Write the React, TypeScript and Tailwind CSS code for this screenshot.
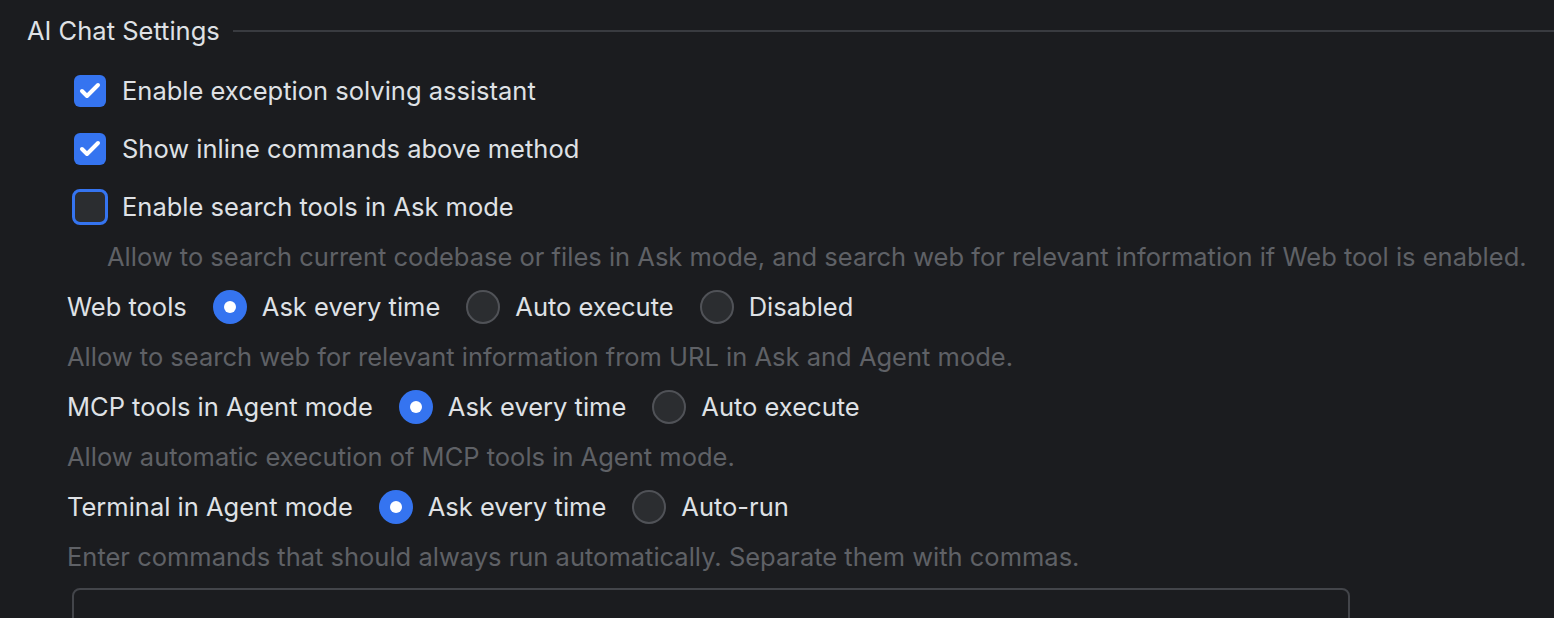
import { Check } from "lucide-react";

const font = { fontFamily: "Inter, 'Noto Sans', sans-serif" };

const CheckRow = ({ label, checked, focused }: { label: string; checked?: boolean; focused?: boolean }) => (
  <div className="h-[58px] flex items-center pl-[74px]">
    {checked ? (
      <div className="w-[32px] h-[32px] rounded-[6px] bg-[#3574f0] flex items-center justify-center">
        <Check className="w-[24px] h-[24px] text-white" strokeWidth={4} />
      </div>
    ) : (
      <div
        className={
          focused
            ? "w-[36px] h-[36px] -ml-[2px] -mr-[2px] rounded-[8px] bg-[#2b2d30] border-[3px] border-[#3574f0]"
            : "w-[32px] h-[32px] rounded-[6px] bg-[#2b2d30] border-2 border-[#4e5157]"
        }
      />
    )}
    <span className="ml-[16px] text-[25.5px] text-[#dfe1e5]">{label}</span>
  </div>
);

const Radio = ({ label, selected }: { label: string; selected?: boolean }) => (
  <div className="flex items-center mr-[26px]">
    {selected ? (
      <div className="w-[34px] h-[34px] rounded-full bg-[#3574f0] flex items-center justify-center">
        <div className="w-[12px] h-[12px] rounded-full bg-white" />
      </div>
    ) : (
      <div className="w-[34px] h-[34px] rounded-full bg-[#2b2d30] border-2 border-[#505257]" />
    )}
    <span className="ml-[15px] text-[25.5px] text-[#dfe1e5]">{label}</span>
  </div>
);

const RadioRow = ({ label, options }: { label: string; options: string[] }) => (
  <div className="h-[50px] flex items-center pl-[67px]">
    <span className="mr-[26px] text-[25.5px] text-[#dfe1e5]">{label}</span>
    {options.map((o, i) => (
      <Radio key={o} label={o} selected={i === 0} />
    ))}
  </div>
);

const Hint = ({ text, indent }: { text: string; indent: string }) => (
  <div className={`h-[50px] flex items-center text-[25.5px] text-[#5f6166] whitespace-nowrap ${indent}`}>{text}</div>
);

export default function App() {
  return (
    <div className="w-[1554px] h-[618px] overflow-hidden bg-[#1b1c1f]" style={font}>
      {/* Section title */}
      <div className="h-[62px] flex items-center pl-[27px]">
        <span className="text-[25.5px] text-[#dfe1e5] whitespace-nowrap">AI Chat Settings</span>
        <div className="ml-[13px] flex-1 h-[2px] bg-[#393b40]" />
      </div>

      <CheckRow label="Enable exception solving assistant" checked />
      <CheckRow label="Show inline commands above method" checked />
      <CheckRow label="Enable search tools in Ask mode" focused />

      <div className="-mt-[4px]">
        <Hint
          indent="pl-[107px]"
          text="Allow to search current codebase or files in Ask mode, and search web for relevant information if Web tool is enabled."
        />
      </div>

      <RadioRow label="Web tools" options={["Ask every time", "Auto execute", "Disabled"]} />
      <Hint indent="pl-[67px]" text="Allow to search web for relevant information from URL in Ask and Agent mode." />

      <RadioRow label="MCP tools in Agent mode" options={["Ask every time", "Auto execute"]} />
      <Hint indent="pl-[67px]" text="Allow automatic execution of MCP tools in Agent mode." />

      <RadioRow label="Terminal in Agent mode" options={["Ask every time", "Auto-run"]} />
      <Hint indent="pl-[67px]" text="Enter commands that should always run automatically. Separate them with commas." />

      <div className="mt-[6px] ml-[72px] w-[1278px] h-[80px] rounded-[8px] border-2 border-[#43454a] bg-[#1b1c1f]" />
    </div>
  );
}
